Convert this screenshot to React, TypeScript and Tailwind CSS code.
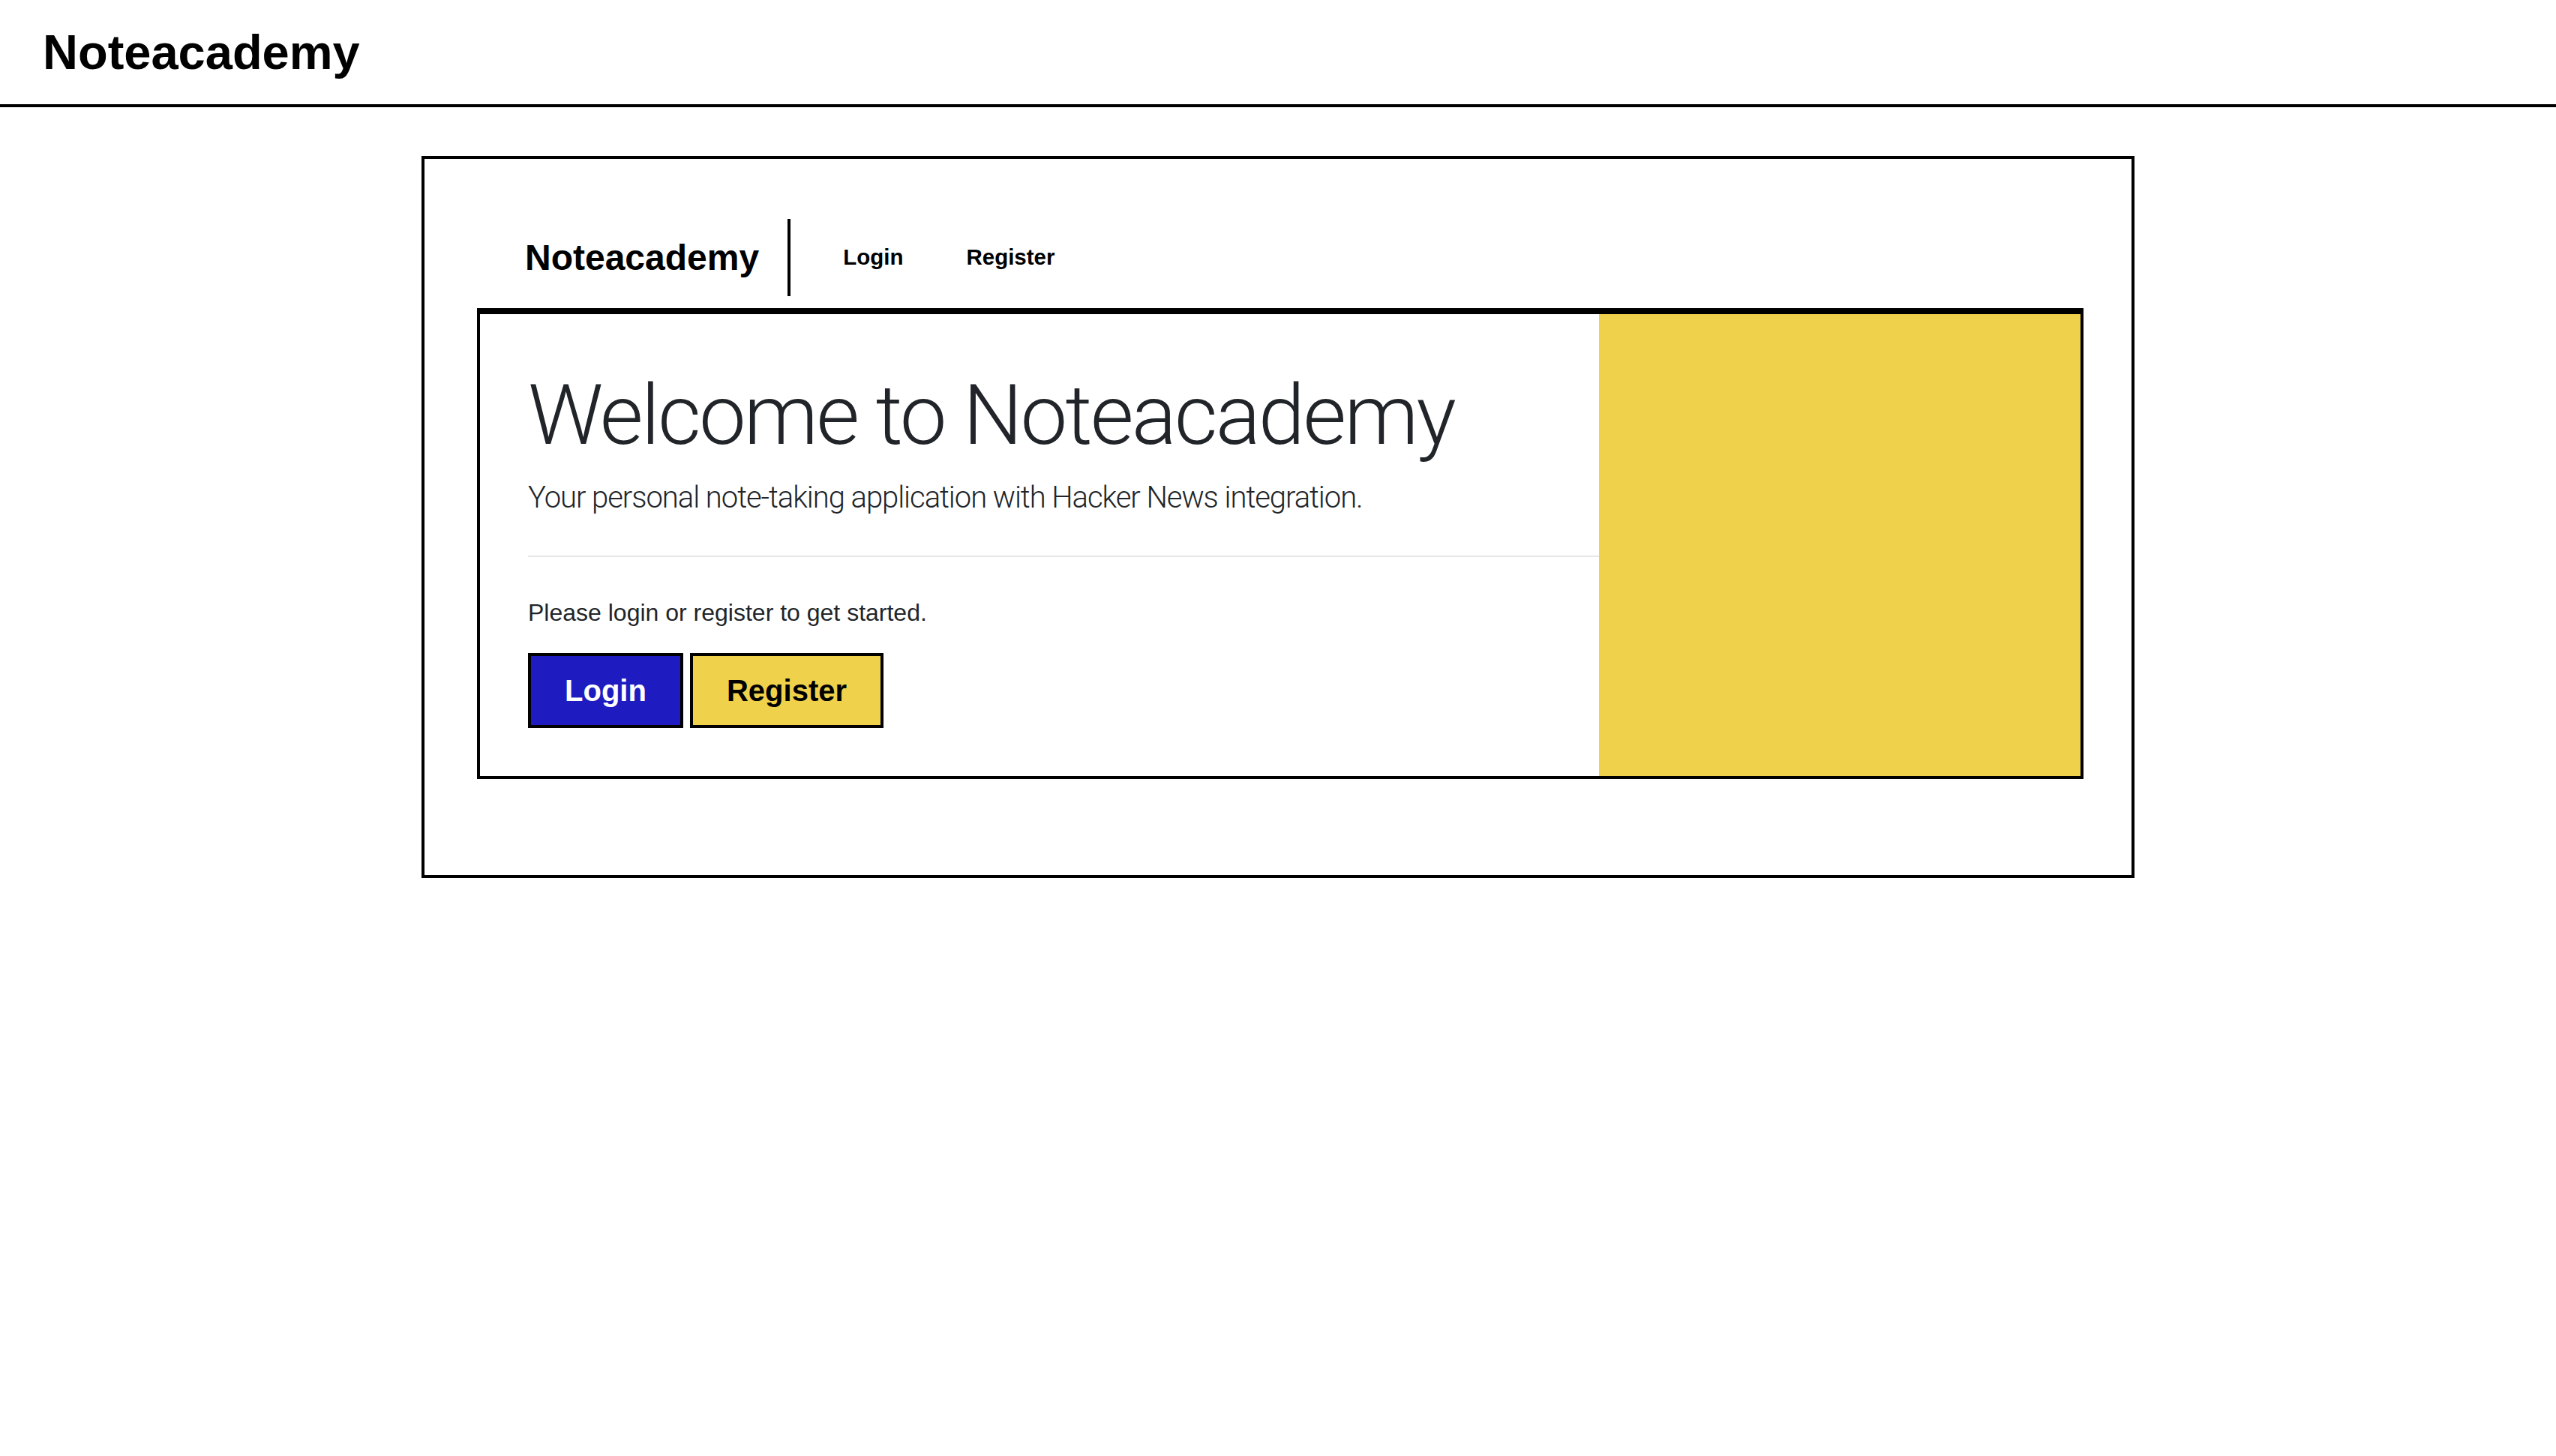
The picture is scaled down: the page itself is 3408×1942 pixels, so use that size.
export default function App() {
	return (
		<div className="min-h-screen bg-white text-[#212529] font-['Liberation_Sans',Arial,sans-serif]">
			<header className="h-[143px] border-b-4 border-black flex items-center pl-[57px]">
				<h1 className="text-[65px] leading-none font-bold text-black">Noteacademy</h1>
			</header>

			<main className="pt-[65px]">
				<div className="w-[2284px] mx-auto border-4 border-black pl-[70px] pr-[64px] pt-[80px] pb-[128px]">
					<nav className="flex items-stretch border-b-4 border-black pl-[64px] pb-[16px]">
						<div className="h-[103px] flex items-center pr-[38px] border-r-4 border-black">
							<span className="text-[48px] leading-none font-bold text-black">Noteacademy</span>
						</div>
						<div className="flex items-center gap-[84px] ml-[70px] text-[29.5px] font-bold text-black">
							<a>Login</a>
							<a>Register</a>
						</div>
					</nav>

					<section className="flex border-4 border-black">
						<div className="flex-1 pl-[64px] pt-[68px] pb-[64px]">
							<h2 className="font-['Roboto',sans-serif] font-light text-[112px] leading-[1.2] tracking-[-2.9px]">
								Welcome to Noteacademy
							</h2>
							<p className="mt-[13px] font-['Roboto',sans-serif] font-light text-[40px] leading-[1.5] tracking-[-1.05px]">
								Your personal note-taking application with Hacker News integration.
							</p>
							<hr className="mt-[47px] border-0 border-t-2 border-[#e6e6e6]" />
							<p className="mt-[50px] text-[32px] leading-[1.5]">
								Please login or register to get started.
							</p>
							<div className="mt-[30px] flex gap-[9px]">
								<button className="w-[207px] h-[100px] border-4 border-black bg-[#1e1cc1] text-white text-[40px] font-bold leading-none">
									Login
								</button>
								<button className="w-[258px] h-[100px] border-4 border-black bg-[#f0d14b] text-black text-[40px] font-bold leading-none">
									Register
								</button>
							</div>
						</div>
						<div className="w-[642px] bg-[#f0d14b]" />
					</section>
				</div>
			</main>
		</div>
	)
}
